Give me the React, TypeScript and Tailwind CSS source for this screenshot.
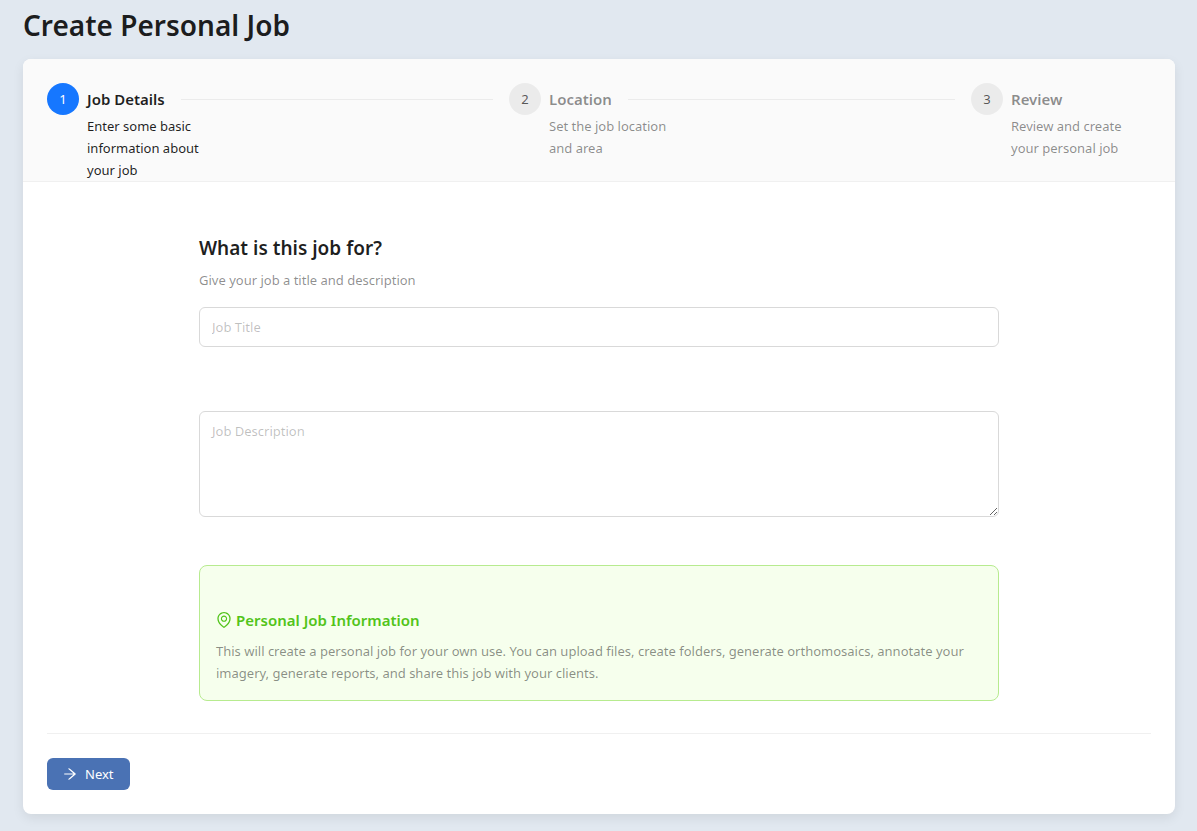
import { AiOutlineArrowRight, AiOutlineEnvironment } from "react-icons/ai";

const steps = [
  { title: "Job Details", description: "Enter some basic information about your job" },
  { title: "Location", description: "Set the job location and area" },
  { title: "Review", description: "Review and create your personal job" },
];

// Trims the empty margin that the icon glyphs carry inside their 1024 unit box.
const iconViewBox = "64 64 896 896";

function Step({ index, active, last }: { index: number; active: boolean; last: boolean }) {
  const { title, description } = steps[index];
  return (
    <li
      aria-current={active ? "step" : undefined}
      className={last ? "flex flex-none gap-2" : "flex min-w-0 flex-1 gap-2"}
    >
      <span
        className={
          active
            ? "flex size-8 shrink-0 items-center justify-center rounded-full bg-[#1677ff] text-[13px] text-white"
            : "flex size-8 shrink-0 items-center justify-center rounded-full bg-black/6 text-[13px] text-black/65"
        }
      >
        {index + 1}
      </span>
      <div className="min-w-0 flex-1">
        <div className="flex h-8 items-center gap-4">
          <span className={active ? "text-[15px] font-semibold text-black/88" : "text-[15px] font-semibold text-black/45"}>
            {title}
          </span>
          {!last && <span className="h-px flex-1 bg-black/6" />}
        </div>
        <p className={active ? "w-[140px] text-black/88" : "w-[140px] text-black/45"}>{description}</p>
      </div>
    </li>
  );
}

export default function App() {
  return (
    <main className="min-h-screen bg-[#e1e8f0] pt-1.5 pr-4 pb-4 pl-[17px] font-['Noto_Sans','Open_Sans',sans-serif] text-[13px] leading-[22px] text-black/88">
      <div className="mx-auto max-w-6xl">
        <h1 className="mb-[15px] text-[28px] leading-[38px] font-semibold">Create Personal Job</h1>
        <section className="overflow-hidden rounded-lg bg-white shadow-[0_4px_12px_rgba(0,0,0,0.08)]">
          <ol className="flex gap-4 border-b border-[#f0f0f0] bg-[#fafafa] px-6 pt-6">
            {steps.map((step, i) => (
              <Step key={step.title} index={i} active={i === 0} last={i === steps.length - 1} />
            ))}
          </ol>
          <form className="p-6" onSubmit={(e) => e.preventDefault()}>
            <div className="mx-auto mb-8 max-w-[800px] pt-7">
              <h2 className="mb-[7px] text-[19px] leading-7 font-semibold">What is this job for?</h2>
              <p className="mb-4 text-black/45">Give your job a title and description</p>
              <input
                type="text"
                aria-label="Job Title"
                placeholder="Job Title"
                className="mb-16 block h-10 w-full rounded-md border border-[#d9d9d9] bg-white px-3 outline-none placeholder:text-black/25 focus:border-[#1677ff]"
              />
              <textarea
                aria-label="Job Description"
                placeholder="Job Description"
                className="mb-12 block h-[106px] w-full resize-y rounded-md border border-[#d9d9d9] bg-white px-3 py-2 outline-none placeholder:text-black/25 focus:border-[#1677ff]"
              />
              <div className="rounded-lg border border-[#b7eb8f] bg-[#f6ffed] px-4 pt-[42px] pb-4">
                <h3 className="mb-2 flex items-center gap-1 text-[15px] leading-6 font-semibold text-[#52c41a]">
                  <AiOutlineEnvironment viewBox={iconViewBox} className="size-4" aria-hidden="true" />
                  Personal Job Information
                </h3>
                <p className="text-black/45">
                  This will create a personal job for your own use. You can upload files, create folders, generate
                  orthomosaics, annotate your imagery, generate reports, and share this job with your clients.
                </p>
              </div>
            </div>
            <div className="border-t border-[#f0f0f0] pt-6">
              <button
                type="submit"
                className="flex h-8 items-center gap-2 rounded-md bg-[#4a72b4] px-4 text-white hover:bg-[#5b82c2]"
              >
                <AiOutlineArrowRight viewBox={iconViewBox} className="size-3.5" aria-hidden="true" />
                Next
              </button>
            </div>
          </form>
        </section>
      </div>
    </main>
  );
}
